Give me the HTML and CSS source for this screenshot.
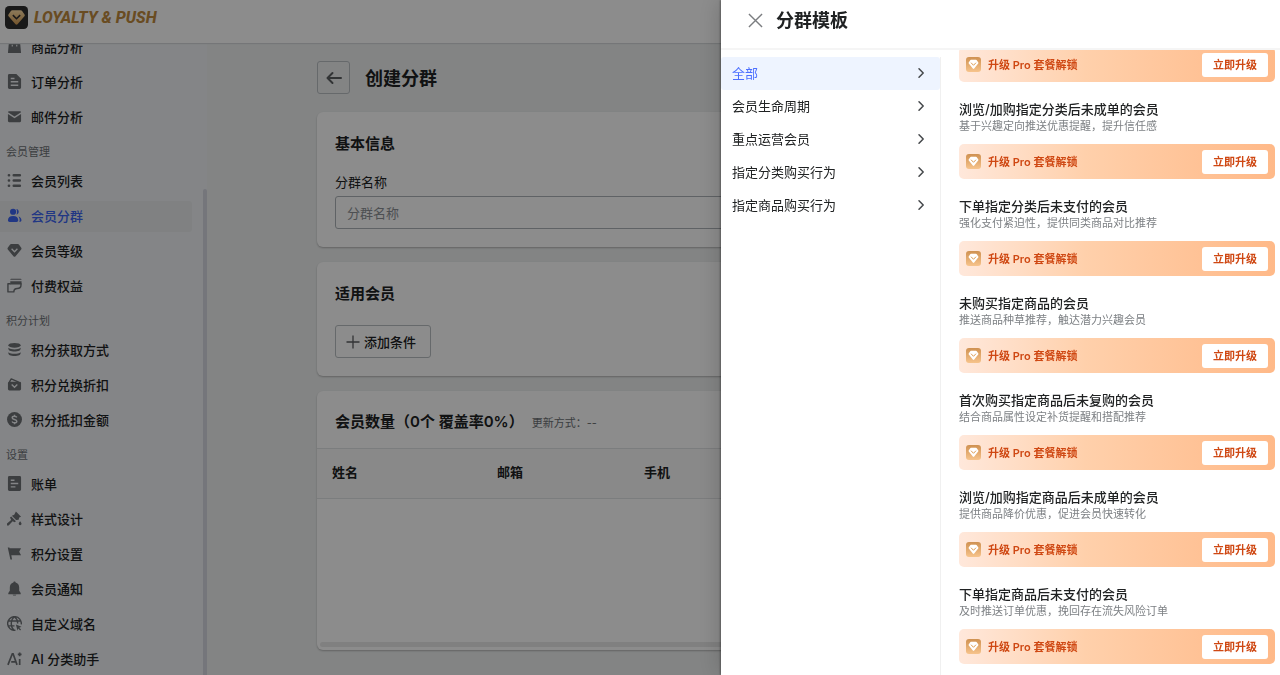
FILE: index.html
```html
<!DOCTYPE html>
<html lang="zh-CN">
<head>
  <meta charset="UTF-8">
  <meta name="viewport" content="width=device-width, initial-scale=1.0">
  <title>创建分群</title>
  <link rel="stylesheet" href="styles.css">
</head>
<body>
  <svg class="sprite" aria-hidden="true">
    <symbol id="i-arrow" viewBox="0 0 12 12"><path d="M4 1.8 8.2 6 4 10.2" fill="none" stroke="currentColor" stroke-width="1.5" stroke-linecap="round" stroke-linejoin="round"/></symbol>
    <symbol id="i-pro" viewBox="0 0 15 15">
      <rect width="15" height="15" rx="3" fill="url(#gold)"/>
      <path d="M5 2.8h5a1 1 0 0 1 .8.4l1.5 2.2a1 1 0 0 1-.1 1.2l-4 4.9a.9.9 0 0 1-1.4 0l-4-4.9a1 1 0 0 1-.1-1.2l1.5-2.2a1 1 0 0 1 .8-.4z" fill="#fff"/>
      <path d="M5.3 6 7.5 8.3 9.7 6" fill="none" stroke="#dc9d55" stroke-width="1" stroke-linecap="round" stroke-linejoin="round"/>
    </symbol>
    <defs>
      <linearGradient id="gold" x1="0" y1="0" x2="0" y2="1"><stop offset="0" stop-color="#cf9151"/><stop offset="1" stop-color="#f7c48c"/></linearGradient>
      <linearGradient id="gem" x1="0" y1="0" x2="0" y2="1"><stop offset="0" stop-color="#ffdfa6"/><stop offset="1" stop-color="#d39b52"/></linearGradient>
    </defs>
  </svg>

  <header class="topbar">
    <svg class="logo-icon" viewBox="0 0 22 22">
      <rect width="22" height="22" rx="4" fill="#2e2e2e"/>
      <path d="M7 4h8a1.5 1.5 0 0 1 1.2.6l2.5 3.5a1.5 1.5 0 0 1-.1 1.8l-6.4 7.3a1.6 1.6 0 0 1-2.4 0L3.4 9.9a1.5 1.5 0 0 1-.1-1.8l2.5-3.5A1.5 1.5 0 0 1 7 4z" fill="url(#gem)"/>
      <path d="M7.5 8.7 11 12.2l3.5-3.5" fill="none" stroke="#2e2e2e" stroke-width="1.5"/>
    </svg>
    <span class="logo-text">LOYALTY &amp; PUSH</span>
  </header>

  <div class="layout">
    <aside class="sidebar">
      <nav class="menu">
        <a class="menu-item" href="#">
          <svg viewBox="0 0 16 16"><path fill-rule="evenodd" d="M2 4h2.500a3.500 3.500 0 0 1 7 0H14l1 11H1zm4 0h4a2 2 0 0 0-4 0zM5 6v2h1.200V6zm4.800 0v2H11V6z"/></svg>商品分析</a>
        <a class="menu-item" href="#">
          <svg viewBox="0 0 16 16"><path fill-rule="evenodd" d="M2.500 0H10l5 5v9.500a1.500 1.500 0 0 1-1.500 1.500h-11A1.500 1.500 0 0 1 1 14.500v-13A1.500 1.500 0 0 1 2.500 0zM4 4v1.600h4V4zM4 7.500v1.600h8V7.500zm0 3.600v1.600h8v-1.600z"/></svg>订单分析</a>
        <a class="menu-item" href="#">
          <svg viewBox="0 0 16 16"><path d="M1 3.500A1.200 1.200 0 0 1 2.200 2.300h11.600A1.200 1.200 0 0 1 15 3.500L8 8z"/><path d="M1 5.200 8 9.800l7-4.600v7.600a1.200 1.200 0 0 1-1.200 1.200H2.200A1.200 1.200 0 0 1 1 12.800z"/></svg>邮件分析</a>

        <div class="menu-group">会员管理</div>
        <a class="menu-item" href="#">
          <svg viewBox="0 0 16 16"><g fill="none" stroke="currentColor" stroke-width="2.700" stroke-linecap="round"><path d="M2 2.500h.2M2 8h.2M2 13.500h.2M7.200 2.500h6.500M7.200 8h6.500M7.200 13.500h6.500"/></g></svg>会员列表</a>
        <a class="menu-item active" href="#">
          <svg viewBox="0 0 16 16"><circle cx="6.500" cy="4" r="3.300"/><path d="M1 13c0-3 2-4.600 5.500-4.600S12 10 12 13c0 1.200-.8 1.800-1.800 1.800H2.800C1.800 14.800 1 14.200 1 13z"/><path d="M10 1c3.400.5 3.400 5.500 0 6 1-2 1-4 0-6zM12.200 9c2.200.6 3.200 2 3.200 4 0 1-.8 1.800-2.200 1.800.6-2 .4-4.200-1-5.800z"/></svg>会员分群</a>
        <a class="menu-item" href="#">
          <svg viewBox="0 0 16 16"><path fill-rule="evenodd" d="M4.500 1h7a1.500 1.500 0 0 1 1.200.6l2.500 3.500a1.500 1.500 0 0 1-.1 1.800l-6 7.300a1.500 1.500 0 0 1-2.200 0l-6-7.300a1.500 1.500 0 0 1-.1-1.800l2.500-3.500A1.500 1.500 0 0 1 4.500 1zM4.400 6.600 8 10.300l3.600-3.700-1-1L8 8.300 5.400 5.600z"/></svg>会员等级</a>
        <a class="menu-item" href="#">
          <svg viewBox="0 0 16 16"><path d="M4.500 .8h10a1 1 0 0 1 1 1H3.500a1 1 0 0 1 1-1zM3.500 3.500h12v3.500h-12z"/><path d="M4 6.200H1v8.600h6.300c0-2.400 1.400-3.600 3.600-3.600 2.400 0 4-1.200 4-3.400V5.500" fill="none" stroke="currentColor" stroke-width="1.500" stroke-linejoin="round"/></svg>付费权益</a>

        <div class="menu-group">积分计划</div>
        <a class="menu-item" href="#">
          <svg viewBox="0 0 16 16"><ellipse cx="8" cy="3.500" rx="6.500" ry="2.500"/><path d="M1.500 6.200C4 8.600 12 8.600 14.500 6.200c.6 3-2.500 4-6.500 4s-7.100-1-6.500-4zM1.500 10.800c2.500 2.400 10.500 2.400 13 0 .6 3-2.500 4-6.500 4s-7.100-1-6.500-4z"/></svg>积分获取方式</a>
        <a class="menu-item" href="#">
          <svg viewBox="0 0 16 16"><path d="M2.500 5.500 4.500 2l8 3.500" fill="none" stroke="currentColor" stroke-width="1.500" stroke-linejoin="round"/><path fill-rule="evenodd" d="M1 6.500A1.500 1.500 0 0 1 2.500 5h11A1.500 1.500 0 0 1 15 6.500v6.300a1.500 1.500 0 0 1-1.500 1.500h-11A1.500 1.500 0 0 1 1 12.800zM4.500 8.400 8 12l3.500-3.600-1-1L8 9.800 5.500 7.400z"/></svg>积分兑换折扣</a>
        <a class="menu-item" href="#">
          <svg viewBox="0 0 16 16"><circle cx="8" cy="8" r="8"/><path class="cut" d="M10.500 5.800C10 4.800 9 4.500 8 4.500c-1.400 0-2.500.6-2.500 1.700C5.500 8.600 10.500 7.300 10.500 9.800c0 1.200-1.100 1.700-2.500 1.700-1.200 0-2.200-.4-2.600-1.400M8 3v1.500M8 11.500V13"/></svg>积分抵扣金额</a>

        <div class="menu-group">设置</div>
        <a class="menu-item" href="#">
          <svg viewBox="0 0 16 16"><path fill-rule="evenodd" d="M2.500 0h11A1.500 1.500 0 0 1 15 1.500v13a1.500 1.500 0 0 1-1.500 1.500h-11A1.500 1.500 0 0 1 1 14.500v-13A1.500 1.500 0 0 1 2.500 0zM4 3.800v1.400h4V3.800zm0 3.500v1.400h8V7.300zm0 3.500v1.400h5v-1.400z"/></svg>账单</a>
        <a class="menu-item" href="#">
          <svg viewBox="0 0 16 16"><path d="M9.500.5 15 6l-2 .8-.6 2.400-2.700.3L5.200 5l2.500-1zM4.500 5.800l5 5-1.300 1.300-2.200-1.300L2 15.200a1.400 1.400 0 0 1-2-2L4.400 9.500 3.200 7zM14 10.800c1 1.200 1.500 2 1.500 2.800a1.500 1.500 0 0 1-3 0c0-.8.5-1.600 1.500-2.800z"/></svg>样式设计</a>
        <a class="menu-item" href="#">
          <svg viewBox="0 0 16 16"><path d="M.8 1.500h1.800l.2.900H15l-2 3.600 2 3.800H4.600L5.400 14.500H3.600z"/></svg>积分设置</a>
        <a class="menu-item" href="#">
          <svg viewBox="0 0 16 16"><path d="M8 .5c.8 0 1.200.5 1.200 1.200C11.700 2.300 13 4.200 13 7v3.500l1.600 2.300V14H1.400v-1.200L3 10.500V7c0-2.800 1.300-4.700 3.800-5.300C6.800 1 7.200.5 8 .5zM6 14.600h4c-.3 1.200-3.700 1.200-4 0z"/></svg>会员通知</a>
        <a class="menu-item" href="#">
          <svg viewBox="0 0 16 16"><path d="M9 15.200A7.300 7.300 0 1 1 15.200 9M8 .8C3.500 4 3.500 12 7.500 15.200M8 .8c2.500 2 3.500 4.500 3.400 7.200M1.500 5.300h13M1.500 10.500H8" fill="none" stroke="currentColor" stroke-width="1.500"/><path d="m9.500 9 6 2.400-2.500 1 2 2-1 1-2-2-.9 2z"/></svg>自定义域名</a>
        <a class="menu-item" href="#">
          <svg viewBox="0 0 16 16"><path d="M1 14.800 5.700 3h.8l4.200 11.800M4.500 11.500h5M13.500 8.500v6.300M13.500 1.500v4M11.500 3.500h4" fill="none" stroke="currentColor" stroke-width="1.800"/></svg>AI 分类助手</a>
      </nav>
      <div class="sidebar-thumb"></div>
    </aside>

    <main class="content">
      <div class="page-head">
        <button class="back-btn" type="button" aria-label="返回">
          <svg viewBox="0 0 16 16"><path d="M15 8H2M6.500 3 1.500 8l5 5" fill="none" stroke="currentColor" stroke-width="2" stroke-linecap="round" stroke-linejoin="round"/></svg>
        </button>
        <h1>创建分群</h1>
      </div>

      <section class="card">
        <h2>基本信息</h2>
        <label class="field-label" for="segment-name">分群名称</label>
        <input class="field-input" id="segment-name" type="text" placeholder="分群名称">
      </section>

      <section class="card">
        <h2>适用会员</h2>
        <button class="add-btn" type="button">
          <svg viewBox="0 0 14 14"><path d="M7 .5v13M.5 7h13" stroke="currentColor" stroke-width="1.300"/></svg>添加条件
        </button>
      </section>

      <section class="card table-card">
        <div class="table-head">
          <h2>会员数量（0个 覆盖率0%）</h2>
          <span class="update-mode">更新方式：--</span>
        </div>
        <table class="members">
          <thead>
            <tr><th>姓名</th><th>邮箱</th><th>手机</th></tr>
          </thead>
        </table>
        <div class="table-scroll"></div>
      </section>
    </main>
  </div>

  <div class="mask"></div>

  <div class="drawer" role="dialog" aria-labelledby="drawer-title">
    <div class="drawer-head">
      <button class="close-btn" type="button" aria-label="关闭">
        <svg viewBox="0 0 16 16"><path d="m1 1 14 14M15 1 1 15" stroke="currentColor" stroke-width="1.500"/></svg>
      </button>
      <h2 id="drawer-title">分群模板</h2>
    </div>
    <div class="drawer-body">
      <nav class="category">
        <a class="category-item active" href="#">全部<svg><use href="#i-arrow"/></svg></a>
        <a class="category-item" href="#">会员生命周期<svg><use href="#i-arrow"/></svg></a>
        <a class="category-item" href="#">重点运营会员<svg><use href="#i-arrow"/></svg></a>
        <a class="category-item" href="#">指定分类购买行为<svg><use href="#i-arrow"/></svg></a>
        <a class="category-item" href="#">指定商品购买行为<svg><use href="#i-arrow"/></svg></a>
      </nav>
      <div class="templates">
        <div class="template">
          <div class="upgrade"><svg><use href="#i-pro"/></svg><span>升级 Pro 套餐解锁</span><button type="button">立即升级</button></div>
        </div>
        <div class="template">
          <h3>浏览/加购指定分类后未成单的会员</h3>
          <p>基于兴趣定向推送优惠提醒，提升信任感</p>
          <div class="upgrade"><svg><use href="#i-pro"/></svg><span>升级 Pro 套餐解锁</span><button type="button">立即升级</button></div>
        </div>
        <div class="template">
          <h3>下单指定分类后未支付的会员</h3>
          <p>强化支付紧迫性，提供同类商品对比推荐</p>
          <div class="upgrade"><svg><use href="#i-pro"/></svg><span>升级 Pro 套餐解锁</span><button type="button">立即升级</button></div>
        </div>
        <div class="template">
          <h3>未购买指定商品的会员</h3>
          <p>推送商品种草推荐，触达潜力兴趣会员</p>
          <div class="upgrade"><svg><use href="#i-pro"/></svg><span>升级 Pro 套餐解锁</span><button type="button">立即升级</button></div>
        </div>
        <div class="template">
          <h3>首次购买指定商品后未复购的会员</h3>
          <p>结合商品属性设定补货提醒和搭配推荐</p>
          <div class="upgrade"><svg><use href="#i-pro"/></svg><span>升级 Pro 套餐解锁</span><button type="button">立即升级</button></div>
        </div>
        <div class="template">
          <h3>浏览/加购指定商品后未成单的会员</h3>
          <p>提供商品降价优惠，促进会员快速转化</p>
          <div class="upgrade"><svg><use href="#i-pro"/></svg><span>升级 Pro 套餐解锁</span><button type="button">立即升级</button></div>
        </div>
        <div class="template">
          <h3>下单指定商品后未支付的会员</h3>
          <p>及时推送订单优惠，挽回存在流失风险订单</p>
          <div class="upgrade"><svg><use href="#i-pro"/></svg><span>升级 Pro 套餐解锁</span><button type="button">立即升级</button></div>
        </div>
      </div>
    </div>
  </div>
</body>
</html>
```

FILE: styles.css
```css
* {
  box-sizing: border-box;
}
body {
  margin: 0;
  height: 100vh;
  display: flex;
  flex-direction: column;
  overflow: hidden;
  font-family: Inter, "Noto Sans CJK SC", sans-serif;
  font-size: 13px;
  line-height: 18px;
  color: #202223;
  background: #eff1f1;
}
h1, h2, h3, p {
  margin: 0;
}
h1, h2 {
  font-weight: 600;
}
h3 {
  font-weight: 500;
}
a {
  color: inherit;
  text-decoration: none;
}
button, input {
  font: inherit;
  color: inherit;
}
button {
  cursor: pointer;
}
.sprite {
  position: absolute;
  width: 0;
  height: 0;
}

/* top bar */
.topbar {
  display: flex;
  flex-shrink: 0;
  align-items: center;
  gap: 6px;
  height: 43px;
  padding: 0 5px 8px;
  background: #fff;
  box-shadow: 0 1px 1px #d5d8da;
  z-index: 1;
}
.logo-icon {
  width: 23px;
  height: 23px;
}
.logo-text {
  font-family: Roboto, "Liberation Sans", sans-serif;
  font-size: 16px;
  font-weight: 800;
  font-style: italic;
  color: #c08a3e;
  white-space: nowrap;
}

/* sidebar */
.layout {
  display: flex;
  flex: 1;
  min-height: 0;
}
.sidebar {
  display: flex;
  flex-shrink: 0;
  width: 207px;
  overflow: hidden;
  background: #f1f3f6;
}
.menu {
  flex: 1;
  margin-top: -11px;
}
.menu-item {
  display: flex;
  align-items: center;
  gap: 9px;
  height: 31px;
  margin: 0 11px 4px 0;
  padding: 0 0 2px 7px;
  border-radius: 0 3px 3px 0;
  font-weight: 500;
}
.menu-item svg {
  width: 15px;
  height: 15px;
  color: #6d7175;
  fill: currentColor;
}
.menu-item .cut {
  fill: none;
  stroke: #f1f3f6;
  stroke-width: 1.5;
}
.menu-item.active {
  background: #e9ebed;
  color: #3c64f0;
}
.menu-item.active svg {
  color: #3c64f0;
}
.menu-group {
  height: 29px;
  padding-left: 6px;
  font-size: 11px;
  line-height: 30px;
  color: #6d7175;
}
.sidebar-thumb {
  width: 4px;
  margin-top: 146px;
  border-radius: 2px 2px 0 0;
  background: #d5d7e0;
}

/* page content */
.content {
  flex: 1;
  min-width: 0;
  padding: 18px 110px 24px;
}
.page-head {
  display: flex;
  align-items: center;
  gap: 15px;
  margin-bottom: 18px;
}
.page-head h1 {
  padding-top: 2px;
  font-size: 18px;
  line-height: 24px;
}
.back-btn {
  display: flex;
  align-items: center;
  justify-content: center;
  width: 33px;
  height: 33px;
  padding: 0;
  border: 1px solid #babfc3;
  border-radius: 3px;
  background: transparent;
  color: #5c5f62;
}
.back-btn svg {
  width: 16px;
  height: 16px;
}
.card {
  margin-bottom: 15px;
  padding: 21px 18px 18px;
  border-radius: 6px;
  background: #fff;
  box-shadow: 0 1px 2px rgba(0, 0, 0, 0.25);
}
.card h2 {
  font-size: 15px;
  line-height: 22px;
  margin-bottom: 20px;
}
.field-label {
  display: block;
  margin-bottom: 7px;
  line-height: 14px;
}
.field-input {
  display: block;
  width: 100%;
  height: 33px;
  padding: 0 11px;
  border: 1px solid #aeb3b8;
  border-radius: 3px;
  background: #fff;
}
.field-input::placeholder {
  color: #8c9196;
}
.add-btn {
  display: flex;
  align-items: center;
  gap: 4px;
  height: 33px;
  padding: 0 14px 0 10px;
  border: 1px solid #babfc3;
  border-radius: 3px;
  background: #fff;
  font-weight: 500;
}
.add-btn svg {
  width: 14px;
  height: 14px;
  color: #5c5f62;
}
.table-card {
  padding: 0 0 3px;
}
.table-head {
  display: flex;
  align-items: baseline;
  gap: 8px;
  height: 57px;
  padding: 20px 18px 0;
}
.table-head h2 {
  margin: 0;
}
.update-mode {
  font-size: 11px;
  color: #6d7175;
}
.members {
  width: 100%;
  table-layout: fixed;
  border-collapse: collapse;
}
.members th {
  height: 50px;
  padding: 0 15px 3px;
  border-top: 1px solid #e1e3e5;
  border-bottom: 1px solid #e1e3e5;
  background: #fafafa;
  text-align: left;
  font-weight: 600;
}
.members th:nth-child(1) {
  width: 165px;
}
.members th:nth-child(2) {
  width: 147px;
}
.table-scroll {
  height: 5px;
  margin: 143px 3px 0;
  border-radius: 3px;
  background: #e9e9e9;
}

/* drawer */
.mask {
  position: fixed;
  inset: 0;
  z-index: 2;
  background: rgba(0, 0, 0, 0.45);
}
.drawer {
  position: fixed;
  top: 0;
  right: 0;
  bottom: 0;
  z-index: 3;
  display: flex;
  flex-direction: column;
  width: 559px;
  max-width: 100%;
  background: #fff;
  box-shadow: -1px 0 2px rgba(0, 0, 0, 0.3), -4px 0 20px rgba(0, 0, 0, 0.15);
}
.drawer-head {
  display: flex;
  flex-shrink: 0;
  align-items: center;
  gap: 13px;
  height: 50px;
  padding: 0 27px 7px;
  border-bottom: 2px solid #f5f5f5;
}
.drawer-head h2 {
  font-size: 18px;
  line-height: 24px;
}
.close-btn {
  display: flex;
  padding: 0;
  border: 0;
  background: none;
  color: #7b7d80;
}
.close-btn svg {
  width: 15px;
  height: 15px;
}
.drawer-body {
  display: flex;
  flex: 1;
  min-height: 0;
}
.category {
  flex-shrink: 0;
  width: 220px;
  margin-top: 7px;
  border-right: 1px solid #f0f0f0;
}
.category-item {
  display: flex;
  align-items: center;
  justify-content: space-between;
  height: 33px;
  padding: 0 13px 2px 11px;
  border-radius: 3px;
}
.category-item svg {
  width: 12px;
  height: 12px;
  color: #44474a;
}
.category-item.active {
  background: #eef4ff;
  color: #4c6fff;
}
.templates {
  flex: 1;
  min-width: 0;
  padding: 0 5px 0 18px;
  overflow: hidden;
}
.template {
  margin-bottom: 18px;
}
.template:first-child {
  margin-top: -3px;
}
.template h3 {
  font-size: 13px;
  line-height: 18px;
}
.template p {
  margin-bottom: 10px;
  font-size: 11px;
  line-height: 16px;
  color: #7d8084;
}
.upgrade {
  display: flex;
  align-items: center;
  gap: 7px;
  height: 35px;
  padding: 0 7px;
  border-radius: 5px;
  background: linear-gradient(90deg, #ffe8db, #ffd0ab 40%, #ffb988);
  color: #cf4813;
  font-size: 11px;
}
.upgrade svg {
  width: 15px;
  height: 15px;
}
.upgrade span {
  flex: 1;
  font-weight: 600;
}
.upgrade button {
  height: 24px;
  padding: 0 11px;
  border: 0;
  border-radius: 3px;
  background: #fff;
  font-weight: 600;
}
```
